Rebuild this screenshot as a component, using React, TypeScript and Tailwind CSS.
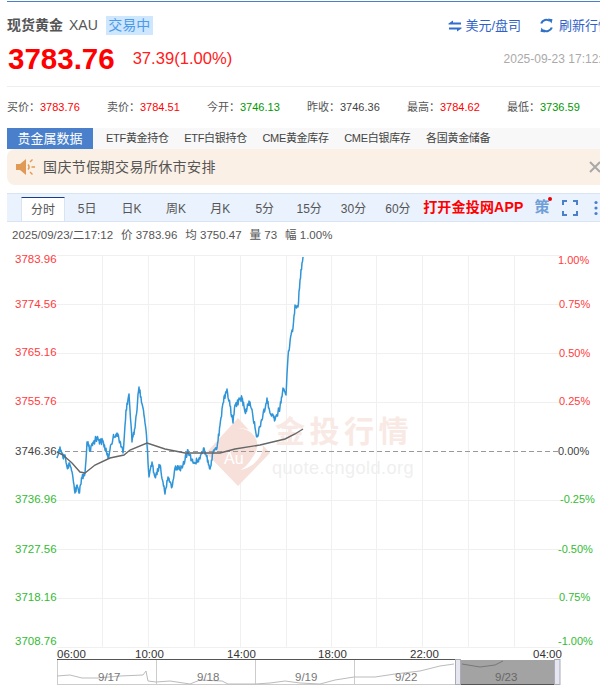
import React from 'react';

const FONT = '"Liberation Sans", "Noto Sans CJK SC", sans-serif';

const stats = [
  { label: '买价：', value: '3783.76', color: 'text-[#ff0000]' },
  { label: '卖价：', value: '3784.51', color: 'text-[#ff0000]' },
  { label: '今开：', value: '3746.13', color: 'text-[#009900]' },
  { label: '昨收：', value: '3746.36', color: 'text-[#444444]' },
  { label: '最高：', value: '3784.62', color: 'text-[#ff0000]' },
  { label: '最低：', value: '3736.59', color: 'text-[#009900]' },
];

const dataTabs = ['ETF黄金持仓', 'ETF白银持仓', 'CME黄金库存', 'CME白银库存', '各国黄金储备'];
const periods = ['分时', '5日', '日K', '周K', '月K', '5分', '15分', '30分', '60分'];
const quote = ['2025/09/23/二17:12', '价 3783.96', '均 3750.47', '量 73', '幅 1.00%'];

const priceLabels = [
  { text: '3783.96', y: 263, color: '#ff3b3b' },
  { text: '3774.56', y: 308, color: '#ff3b3b' },
  { text: '3765.16', y: 356, color: '#ff3b3b' },
  { text: '3755.76', y: 405, color: '#ff3b3b' },
  { text: '3746.36', y: 455, color: '#444444' },
  { text: '3736.96', y: 503, color: '#33bb33' },
  { text: '3727.56', y: 553, color: '#33bb33' },
  { text: '3718.16', y: 601, color: '#33bb33' },
  { text: '3708.76', y: 645, color: '#33bb33' },
];

const pctLabels = [
  { text: '1.00%', y: 264, x: 558, color: '#ff3b3b' },
  { text: '0.75%', y: 308, x: 559, color: '#ff3b3b' },
  { text: '0.50%', y: 357, x: 559, color: '#ff3b3b' },
  { text: '0.25%', y: 405, x: 559, color: '#ff3b3b' },
  { text: '0.00%', y: 455, x: 558, color: '#444444' },
  { text: '-0.25%', y: 503, x: 560, color: '#33bb33' },
  { text: '-0.50%', y: 553, x: 558, color: '#33bb33' },
  { text: '0.75%', y: 601, x: 559, color: '#33bb33' },
  { text: '-1.00%', y: 645, x: 558, color: '#33bb33' },
];

// 走势的关键点，取自原图
const pricePoints: [number, number][] = [
  [57, 458], [60, 447], [63, 458], [65, 455], [67, 467], [70, 465], [73, 478], [75, 493], [77, 485], [79, 493],
  [82, 478], [85, 473], [87, 442], [90, 450], [96, 438], [100, 442], [103, 441], [108, 458], [113, 438], [117, 433],
  [123, 453], [126, 410], [129, 394], [132, 442], [135, 428], [139, 387], [143, 408], [146, 430], [149, 477],
  [152, 462], [155, 477], [160, 465], [165, 494], [168, 477], [172, 487], [175, 468], [182, 468], [188, 450],
  [193, 463], [200, 459], [204, 448], [210, 469], [213, 453], [217, 448], [223, 403], [227, 389], [233, 423],
  [235, 405], [242, 398], [245, 412], [250, 402], [257, 437], [262, 420], [267, 398], [270, 413], [275, 420],
  [280, 407], [283, 388], [286, 395], [288, 357], [291, 335], [293, 328], [295, 305], [298, 307], [300, 280], [303, 257],
];

const avgPoints: [number, number][] = [
  [57, 452], [63, 455], [72, 463], [80, 472], [85, 473], [95, 465], [110, 458], [124, 455], [130, 450], [147, 443],
  [165, 449], [185, 453], [200, 453], [220, 453], [235, 449], [260, 445], [285, 439], [295, 434], [303, 429],
];

const jagged = (points: [number, number][]) => {
  let seed = 17;
  const out: string[] = [];
  points.forEach(([x, y], i) => {
    if (i > 0) {
      const [px, py] = points[i - 1];
      const n = Math.round((x - px) * 2);
      for (let step = 1; step < n; step++) {
        seed = (seed * 137 + 59) % 251;
        const noise = (seed / 251 - 0.5) * 6;
        out.push(`${(px + step / 2).toFixed(1)},${(py + ((y - py) * step) / n + noise).toFixed(1)}`);
      }
    }
    out.push(`${x},${y}`);
  });
  return out.join(' ');
};

const smooth = (points: [number, number][]) => points.map(p => p.join(',')).join(' ');

const App: React.FC = () => {
  const hLines = [255, 304, 353, 402, 500, 549, 598, 647];
  const vLines = [102, 148, 194, 240, 286, 331, 376, 422, 468, 514];

  return (
    <div className="w-[600px] h-[692px] overflow-hidden bg-white" style={{ fontFamily: FONT }}>
      <div className="w-[612px] ml-[7px] pt-px">
        <div className="h-px bg-[#4a7fcc]" />

        {/* 标题 */}
        <div className="flex items-center h-[19px] mt-[14px]">
          <span className="text-[14px] font-bold text-[#555555]">现货黄金</span>
          <span className="text-[14px] text-[#555555] ml-[6px]">XAU</span>
          <span className="ml-[8px] h-[19px] w-[47px] bg-[#cfe6ff] text-[#4a9be8] text-[14px] leading-[19px] text-center">交易中</span>
          <div className="flex items-center ml-auto text-[13px] text-[#2f62c8] whitespace-nowrap">
            <svg width="14" height="12" viewBox="0 0 14 12" className="mr-[3px]">
              <path d="M0.5 3.6L5 0.5V2.6H13V4.6H0.5zM13.5 8.4L9 11.5V9.4H1V7.4H13.5z" fill="#2f6fd0" />
            </svg>
            <span>美元/盘司</span>
            <svg width="15" height="15" viewBox="0 0 15 15" className="ml-[18px] mr-[5px]">
              <path d="M2.2 5.5A5.6 5.6 0 0 1 11 3" fill="none" stroke="#2f72c8" strokeWidth="2.2" />
              <path d="M12.8 9.5A5.6 5.6 0 0 1 4 12" fill="none" stroke="#2f72c8" strokeWidth="2.2" />
              <path d="M9 0.5L13.5 1.2L12.5 5.5zM6 14.5L1.5 13.8L2.5 9.5z" fill="#2f72c8" />
            </svg>
            <span className="w-[60px]">刷新行情</span>
          </div>
        </div>

        {/* 价格 */}
        <div className="flex items-center h-[34px] mt-[7px]">
          <span className="ml-px text-[29.5px] font-bold text-[#ff0000]">3783.76</span>
          <span className="ml-[18px] text-[16.6px] text-[#ff2020]">37.39(1.00%)</span>
          <span className="ml-auto mr-[4px] text-[12px] text-[#aaaaaa] whitespace-nowrap">2025-09-23 17:12:59</span>
        </div>

        <div className="h-px bg-[#eeeeee] mt-[10px]" />

        {/* 行情数据 */}
        <div className="flex h-[41px] items-center text-[11px] text-[#555555]">
          {stats.map(item => (
            <div key={item.label} className="w-[100px]">
              {item.label}
              <span className={item.color}>{item.value}</span>
            </div>
          ))}
        </div>

        {/* 数据分类 */}
        <div className="flex items-center h-[21px] bg-[#f8f8f8]">
          <div className="w-[86px] h-[21px] bg-[#4a7fcc] text-white text-[13px] leading-[21px] text-center">贵金属数据</div>
          <div className="flex gap-[15.5px] ml-[13px] text-[11px] tracking-[-0.3px] text-[#444444]">
            {dataTabs.map(tab => (
              <span key={tab}>{tab}</span>
            ))}
          </div>
        </div>

        {/* 通知 */}
        <div className="relative flex items-center h-[36px] bg-[#fbf0e6] rounded-l-lg pl-[9px]">
          <svg width="20" height="18" viewBox="0 0 20 18">
            <path d="M0 6h4l6-5v16l-6-5H0z" fill="#e09a55" />
            <path d="M12 6.5a3.5 3.5 0 0 1 0 5" fill="none" stroke="#e09a55" strokeWidth="1.6" />
            <path d="M14 4l2.5-2.5M14 14l2.5 2.5M15.5 9H19" fill="none" stroke="#e09a55" strokeWidth="1.4" />
          </svg>
          <span className="ml-[7px] text-[14px] tracking-[0.4px] text-[#555555]">国庆节假期交易所休市安排</span>
          <svg width="14" height="14" viewBox="0 0 14 14" className="absolute left-[581px] top-[11px]">
            <path d="M2 2l10 10M12 2L2 12" stroke="#a8a8a8" strokeWidth="2" />
          </svg>
        </div>

        {/* 周期 */}
        <div className="flex items-end h-[29px] mt-[8px] bg-[#eaf2fd] border-y border-[#d8e4f2] pl-[14px] text-[12px] text-[#555555]">
          {periods.map((period, i) => (
            <div
              key={period}
              className={
                i === 0
                  ? 'w-[44px] h-[24px] leading-[24px] text-center bg-white border-x border-t border-x-[#d8e4f2] border-t-[#1a3a8a]'
                  : 'w-[44.4px] h-[24px] leading-[24px] text-center'
              }
            >
              {period}
            </div>
          ))}
          <span className="self-center ml-[3px] text-[14px] tracking-[0.2px] font-bold text-[#ff0000] whitespace-nowrap">打开金投网APP</span>
          <span className="relative self-center ml-[11px] text-[15px] font-bold text-[#6f9fd8]">
            策
            <span className="absolute left-[13px] top-[1px] size-[4px] rounded-full bg-[#ee0000]" />
          </span>
          <svg width="16" height="16" viewBox="0 0 16 16" className="self-center ml-[12px]">
            <path d="M1 5V1h4M11 1h4v4M15 11v4h-4M5 15H1v-4" fill="none" stroke="#4a7fcc" strokeWidth="2" />
          </svg>
          <svg width="6" height="16" viewBox="0 0 6 16" className="self-center ml-[15px]">
            <circle cx="3" cy="2.5" r="1.6" fill="#4a7fcc" />
            <circle cx="3" cy="8" r="1.6" fill="#4a7fcc" />
            <circle cx="3" cy="13.5" r="1.6" fill="#4a7fcc" />
          </svg>
        </div>

        <div className="flex gap-[8px] h-[28px] leading-[26px] pl-[5px] text-[11.5px] text-[#555555] whitespace-nowrap">
          {quote.map(q => (
            <span key={q}>{q}</span>
          ))}
        </div>
      </div>

      {/* 走势图 */}
      <svg width="600" height="442" viewBox="0 250 600 442" className="block" style={{ fontFamily: FONT }}>
        {hLines.map(y => (
          <line key={y} x1="57" x2="560" y1={y + 0.5} y2={y + 0.5} stroke="#f0f0f0" />
        ))}
        {vLines.map(x => (
          <line key={x} x1={x + 0.5} x2={x + 0.5} y1="255" y2="647" stroke="#f0f0f0" />
        ))}

        {/* 水印 */}
        <path d="M238 418L270 453L238 486L206 453z" fill="#f7e0da" />
        <path d="M238 428C258 430 262 446 252 458C248 465 244 468 240 470C252 468 262 458 263 448C262 436 252 428 238 428z" fill="#ffffff" />
        <text x="224" y="464" fontSize="16" fill="#ffffff">Au</text>
        <text x="275" y="442" fontSize="30" fontWeight="700" letterSpacing="4.5" fill="#f9e9e4">金投行情</text>
        <text x="272" y="474" fontSize="18.2" letterSpacing="0.4" fill="#efefef">quote.cngold.org</text>

        <line x1="57" x2="560" y1="451.5" y2="451.5" stroke="#999999" strokeDasharray="5 3" />

        <polyline points={jagged(pricePoints)} fill="none" stroke="#2f95d8" strokeWidth="1.5" strokeLinejoin="round" />
        <polyline points={smooth(avgPoints)} fill="none" stroke="#666666" strokeWidth="1.4" />

        {priceLabels.map(l => (
          <text key={l.text} x="15" y={l.y} fontSize="11.5" fill={l.color}>{l.text}</text>
        ))}
        {pctLabels.map(l => (
          <text key={l.y} x={l.x} y={l.y} fontSize="11" fill={l.color}>{l.text}</text>
        ))}

        {/* 时间轴 */}
        {[['06:00', 57], ['10:00', 135], ['14:00', 227], ['18:00', 318], ['22:00', 410], ['04:00', 533]].map(([t, x]) => (
          <text key={t} x={x} y="658" fontSize="11.5" fill="#333333">{t}</text>
        ))}

        {/* 缩略图 */}
        <rect x="461" y="660" width="93" height="24" fill="#a3a3a3" />
        <line x1="57" x2="455" y1="659.5" y2="659.5" stroke="#555555" />
        <line x1="57" x2="560" y1="684.5" y2="684.5" stroke="#cccccc" />
        <line x1="461" x2="554" y1="684.5" y2="684.5" stroke="#555555" />
        <line x1="57.5" x2="57.5" y1="660" y2="684" stroke="#cccccc" />
        {[156, 255, 354].map(x => (
          <line key={x} x1={x + 0.5} x2={x + 0.5} y1="660" y2="684" stroke="#cccccc" />
        ))}
        <polyline
          points="57,676 70,675 82,678 98,678 120,676 143,675 146,671 148,681 156,682 170,681 190,684 200,680 222,681 228,684 255,684 270,683 285,681 300,683 320,684 335,680 354,677 375,677 395,674 420,671 440,666 454,664"
          fill="none"
          stroke="#bbbbbb"
        />
        <polyline points="462,664 480,667 495,665 503,661" fill="none" stroke="#777777" />
        {[['9/17', 98], ['9/18', 197], ['9/19', 295], ['9/22', 395], ['9/23', 495]].map(([t, x]) => (
          <text key={t} x={x} y="681" fontSize="11.5" fill={t === '9/23' ? '#666666' : '#777777'}>{t}</text>
        ))}
        <rect x="455.5" y="659.5" width="5" height="25" fill="#e6e6f0" stroke="#aaaab8" />
        <rect x="554.5" y="659.5" width="5.5" height="25" fill="#e6e6f0" stroke="#aaaab8" />
      </svg>
    </div>
  );
};

export default App;
